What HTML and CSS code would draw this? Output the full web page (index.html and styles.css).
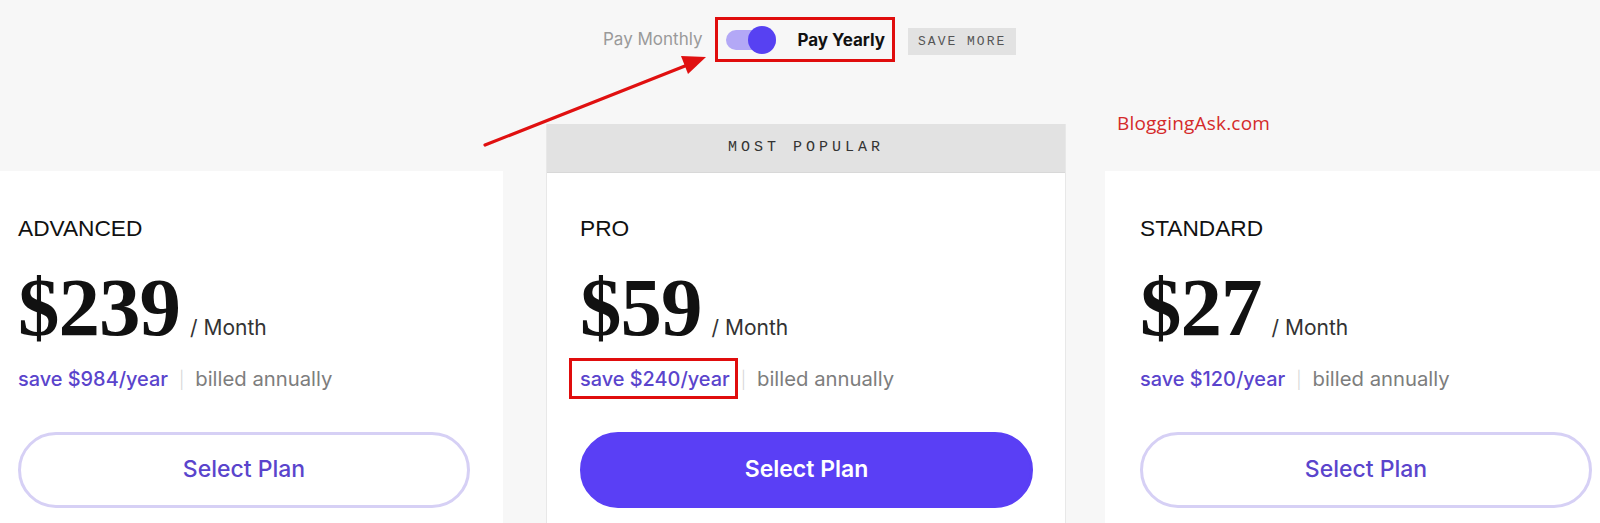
FILE: index.html
```html
<!DOCTYPE html>
<html lang="en">
<head>
<meta charset="utf-8">
<title>Pricing</title>
<link rel="stylesheet" href="styles.css">
</head>
<body>
<div class="page">
  <div class="billing">
    <span class="pay-monthly">Pay Monthly</span>
    <div class="highlight-box">
      <span class="toggle"><span class="knob"></span></span>
      <span class="pay-yearly">Pay Yearly</span>
    </div>
    <span class="save-more">SAVE MORE</span>
  </div>

  <div class="watermark">BloggingAsk.com</div>

  <div class="cards">
    <div class="card">
      <div class="card-body">
        <div class="plan-name">ADVANCED</div>
        <div class="price-row"><span class="price">$239</span><span class="per">/ Month</span></div>
        <div class="save-row"><span class="save">save $984/year</span><span class="sep">|</span><span class="billed">billed annually</span></div>
        <button class="btn btn-outline">Select Plan</button>
      </div>
    </div>

    <div class="card card-pro">
      <div class="popular">MOST POPULAR</div>
      <div class="card-body">
        <div class="plan-name">PRO</div>
        <div class="price-row"><span class="price">$59</span><span class="per">/ Month</span></div>
        <div class="save-row"><span class="save save-marked">save $240/year</span><span class="sep">|</span><span class="billed">billed annually</span></div>
        <button class="btn btn-solid">Select Plan</button>
      </div>
    </div>

    <div class="card">
      <div class="card-body">
        <div class="plan-name">STANDARD</div>
        <div class="price-row"><span class="price">$27</span><span class="per">/ Month</span></div>
        <div class="save-row"><span class="save">save $120/year</span><span class="sep">|</span><span class="billed">billed annually</span></div>
        <button class="btn btn-outline">Select Plan</button>
      </div>
    </div>
  </div>

  <svg class="arrow" width="1600" height="523" viewBox="0 0 1600 523">
    <line x1="485" y1="145" x2="690" y2="64" stroke="#e01010" stroke-width="3.2" stroke-linecap="round"/>
    <polygon points="706,57 681,56 688,74" fill="#e01010"/>
  </svg>
</div>
</body>
</html>
```

FILE: styles.css
```css
* { box-sizing: border-box; }

html, body {
  margin: 0;
  padding: 0;
  background: #f7f7f7;
  overflow: hidden;
}

body {
  width: 1600px;
  height: 523px;
  font-family: "Liberation Sans", Arial, sans-serif;
}

.page {
  position: relative;
  width: 1600px;
  height: 523px;
  overflow: hidden;
}

/* billing toggle row */
.billing {
  display: flex;
  align-items: flex-start;
  padding-left: 603px;
  padding-top: 17px;
  height: 124px;
}

.pay-monthly {
  font-family: Inter, "Liberation Sans", sans-serif;
  font-size: 17px;
  color: #9a9a9a;
  line-height: 45px;
}

.highlight-box {
  display: flex;
  align-items: center;
  height: 45px;
  margin-left: 13px;
  padding: 0 7px 0 8px;
  border: 3px solid #e00d0d;
}

.toggle {
  position: relative;
  width: 50px;
  height: 20px;
  border-radius: 10px;
  background: #b3a8f6;
}

.knob {
  position: absolute;
  right: 0;
  top: -4px;
  width: 28px;
  height: 28px;
  border-radius: 50%;
  background: #5741f2;
}

.pay-yearly {
  margin-left: 21px;
  font-family: Inter, "Liberation Sans", sans-serif;
  font-weight: 700;
  font-size: 17px;
  color: #111;
}

.save-more {
  margin-left: 13px;
  margin-top: 11px;
  height: 27px;
  line-height: 27px;
  padding: 0 10px;
  background: #e2e2e2;
  font-family: "Liberation Mono", monospace;
  font-size: 13px;
  letter-spacing: 2px;
  color: #555;
}

.watermark {
  position: absolute;
  left: 1117px;
  top: 110px;
  font-family: "Open Sans", sans-serif;
  font-size: 19px;
  letter-spacing: 0.2px;
  color: #d42a2a;
}

/* cards */
.cards {
  display: flex;
  align-items: flex-start;
  margin-left: -17px;
}

.card {
  flex: none;
  width: 520px;
  margin-top: 47px;
  background: #fff;
  height: 420px;
}

.card-pro {
  margin: 0 39px 0 43px;
  border: 1px solid #e8e8e8;
  border-top: none;
}

.popular {
  height: 49px;
  background: #e2e2e2;
  border-bottom: 1px solid #d8d8d8;
  text-align: center;
  line-height: 48px;
  font-family: "Liberation Mono", monospace;
  font-size: 15px;
  letter-spacing: 4px;
  color: #333;
}

.card-body {
  padding: 43px 33px 0 35px;
}

.card-pro .card-body {
  padding: 41px 32px 0 33px;
}

.plan-name {
  font-size: 22.7px;
  line-height: 28px;
  color: #111;
}

.price-row {
  display: flex;
  align-items: baseline;
  margin-top: 25px;
  height: 80px;
}

.price {
  font-family: "Liberation Serif", "Times New Roman", serif;
  font-weight: 700;
  font-size: 83px;
  line-height: 80px;
  color: #111;
  letter-spacing: -1px;
}

.per {
  margin-left: 10px;
  font-family: Inter, "Liberation Sans", sans-serif;
  font-size: 21px;
  color: #333;
}

.save-row {
  margin-top: 20px;
  display: flex;
  align-items: baseline;
  font-family: Inter, "Liberation Sans", sans-serif;
  font-size: 20.3px;
  line-height: 24px;
}

.save {
  position: relative;
  color: #5a44cc;
  font-weight: 500;
  font-size: 19.9px;
}

.save-marked::after {
  content: "";
  position: absolute;
  left: -11px;
  right: -8px;
  top: -9px;
  bottom: -8px;
  border: 3px solid #e00d0d;
}

.sep {
  margin: 0 11px 0 11px;
  color: #d6d6d6;
  font-weight: 300;
  font-size: 17px;
}

.billed {
  color: #7d7d7d;
}

.btn {
  display: block;
  width: 100%;
  height: 76px;
  margin-top: 40px;
  border-radius: 38px;
  font-family: Inter, "Liberation Sans", sans-serif;
  font-size: 23px;
  font-weight: 500;
  cursor: pointer;
  padding-bottom: 4px;
}

.btn-outline {
  background: #fff;
  border: 3px solid #d6d0f5;
  color: #5a44cc;
}

.btn-solid {
  background: #5a3ff5;
  border: 3px solid #5a3ff5;
  color: #fff;
  font-weight: 600;
}

.arrow {
  position: absolute;
  left: 0;
  top: 0;
  pointer-events: none;
}
```
